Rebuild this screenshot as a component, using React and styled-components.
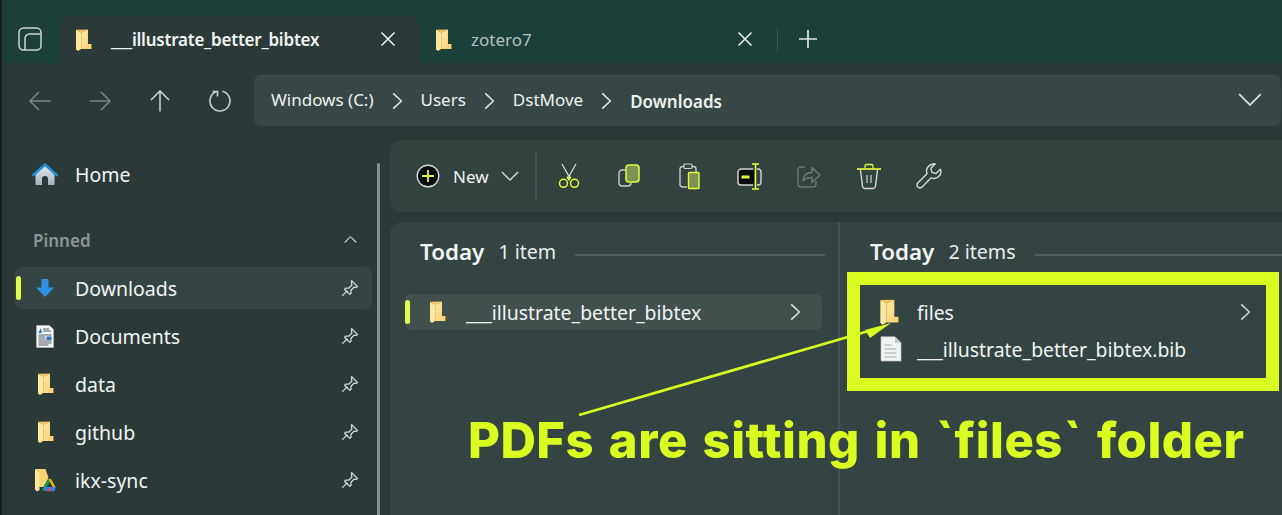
import React from "react";
import styled, { createGlobalStyle } from "styled-components";

const Global = createGlobalStyle`
  html, body { margin: 0; padding: 0; background: #2b3a38; }
  * { box-sizing: border-box; }
  #root { width: 1282px; height: 515px; overflow: hidden; }
`;

const Window = styled.div`
  position: relative;
  width: 1282px;
  height: 515px;
  overflow: hidden;
  display: flex;
  flex-direction: column;
  background: #2b3a38;
  border-left: 2px solid #171c1b;
  font-family: "Noto Sans", "Open Sans", sans-serif;
  color: #f2f4f3;
`;

const TitleBar = styled.div`
  height: 63px;
  flex: none;
  display: flex;
  align-items: flex-end;
  background: #1b3f39;
`;
const TabsButton = styled.div`
  width: 57px;
  height: 47px;
  flex: none;
  display: flex;
  align-items: center;
  justify-content: center;
  padding: 0 8px 0 6px;
  svg { margin-top: -1px; }
`;
const Tab = styled.div`
  height: 47px;
  display: flex;
  align-items: center;
  flex: none;
  width: ${(p) => p.$w}px;
  padding: 0 0 0 ${(p) => p.$pad}px;
  background: ${(p) => (p.$active ? "#2b3a38" : "transparent")};
  border-radius: 10px 10px 0 0;
  position: relative;
`;
const TabLabel = styled.span`
  flex: 1;
  margin-left: ${(p) => p.$gap}px;
  font-size: 17px;
  letter-spacing: ${(p) => (p.$active ? "-0.22px" : "0")};
  font-weight: ${(p) => (p.$active ? 600 : 400)};
  color: ${(p) => (p.$active ? "#f1f4f3" : "#b5c2bf")};
  white-space: nowrap;
  margin-top: 0;
`;
const CloseBox = styled.span`
  width: 18px;
  height: 18px;
  margin-right: ${(p) => p.$mr}px;
  margin-top: -2px;
  display: flex;
`;
const TabSep = styled.div`
  width: 1px;
  height: 24px;
  background: #395750;
  margin: 0 20px 0 0;
  align-self: center;
`;
const PlusBox = styled.div`
  width: 20px;
  height: 20px;
  margin-top: -2px;
  margin-right: 20px;
  align-self: center;
  display: flex;
`;

const NavBar = styled.div`
  height: 77px;
  flex: none;
  display: flex;
  align-items: flex-start;
  padding-top: 12px;
  border-bottom: 2px solid #293735;
`;
const NavButtons = styled.div`
  width: 252px;
  flex: none;
  height: 51px;
  display: flex;
  align-items: center;
  padding-left: 8px;
`;
const NavButton = styled.div`
  width: 60px;
  height: 100%;
  display: flex;
  align-items: center;
  justify-content: center;
  opacity: ${(p) => (p.$dim ? 0.42 : 0.85)};
`;
const Address = styled.div`
  flex: 1;
  height: 51px;
  margin-right: 1px;
  background: #364745;
  border-radius: 7px;
  border-top: 1px solid #3c4d4b;
  display: flex;
  align-items: center;
  padding-left: 17px;
`;
const Crumb = styled.span`
  font-size: 17px;
  font-weight: ${(p) => (p.$bold ? 600 : 400)};
  color: #eff2f1;
  white-space: nowrap;
  margin-top: ${(p) => (p.$bold ? 1 : -3)}px;
`;
const CrumbSep = styled.span`
  width: 47px;
  display: flex;
  justify-content: center;
`;
const AddressEnd = styled.span`
  margin-left: auto;
  margin-right: 19px;
  display: flex;
  margin-top: -2px;
`;

const Body = styled.div`
  flex: 1;
  display: flex;
  min-height: 0;
`;
const Sidebar = styled.aside`
  width: 388px;
  flex: none;
  position: relative;
  padding: 10px 0 0 13px;
`;
const ScrollThumb = styled.div`
  position: absolute;
  left: 375px;
  top: 23px;
  bottom: -10px;
  width: 3px;
  background: #84908e;
  border-radius: 2px;
`;
const HomeRow = styled.div`
  height: 50px;
  width: 357px;
  display: flex;
  align-items: center;
  padding-left: 17px;
`;
const Section = styled.div`
  height: 20px;
  margin: 30px 0 17px;
  width: 357px;
  padding: 0 15px 0 18px;
  display: flex;
  align-items: center;
  justify-content: space-between;
  font-size: 17px;
  font-weight: 600;
  color: #8b9694;
`;
const UpChevron = styled.span`
  display: flex;
  transform: rotate(180deg);
`;
const SideRow = styled.div`
  position: relative;
  height: 42px;
  width: 357px;
  margin-bottom: 6px;
  border-radius: 6px;
  background: ${(p) => (p.$active ? "#354543" : "transparent")};
  display: flex;
  align-items: center;
  padding-left: 17px;
  padding-right: 13px;
`;
const Indicator = styled.span`
  position: absolute;
  left: ${(p) => p.$left}px;
  top: ${(p) => p.$top}px;
  width: 5px;
  height: 24px;
  border-radius: 3px;
  background: #e1fb4e;
`;
const IconSlot = styled.span`
  width: 26px;
  height: 24px;
  flex: none;
  display: flex;
  align-items: center;
  justify-content: center;
`;
const SideLabel = styled.span`
  flex: 1;
  margin-left: 17px;
  font-size: 19.5px;
  color: #f1f4f3;
  white-space: nowrap;
  margin-top: 1px;
`;
const HomeLabel = styled(SideLabel)`
  margin-top: -1px;
`;

const Main = styled.main`
  flex: 1;
  min-width: 0;
  display: flex;
  flex-direction: column;
  gap: 10px;
`;
const Toolbar = styled.div`
  height: 72px;
  flex: none;
  background: #32423f;
  border-radius: 12px 0 0 12px;
  display: flex;
  align-items: center;
  padding-left: 26px;
`;
const NewButton = styled.div`
  display: flex;
  align-items: center;
  width: 119px;
  font-size: 17px;
  color: #f2f4f3;
`;
const NewLabel = styled.span`
  margin-left: 13px;
  margin-right: 12px;
`;
const ToolSep = styled.div`
  width: 2px;
  height: 48px;
  background: #445452;
  margin-right: 2px;
`;
const ToolButton = styled.div`
  width: 60px;
  display: flex;
  justify-content: center;
  align-items: center;
`;

const Content = styled.div`
  flex: 1;
  min-height: 0;
  background: #334442;
  border-radius: 12px 0 0 0;
  display: flex;
`;
const Column = styled.section`
  width: ${(p) => p.$w}px;
  flex: none;
  padding: ${(p) => p.$padTop}px 0 0;
  border-right: ${(p) => (p.$divider ? "2px solid #43534f" : "none")};
`;
const ColHead = styled.div`
  height: 30px;
  display: flex;
  align-items: center;
  padding-left: ${(p) => p.$pad}px;
  padding-right: ${(p) => p.$right}px;
`;
const HeadTitle = styled.span`
  font-size: 22.4px;
  font-weight: 600;
  color: #f2f4f3;
`;
const HeadCount = styled.span`
  font-size: 19.6px;
  color: #e9edec;
  margin-left: 14px;
`;
const HeadLine = styled.span`
  flex: 1;
  height: 2px;
  margin-left: ${(p) => p.$gap}px;
  margin-top: 7px;
  background: #4f5f5c;
`;
const FileRow = styled.div`
  position: relative;
  height: ${(p) => p.$h}px;
  margin: ${(p) => p.$m};
  display: flex;
  align-items: center;
  padding-left: ${(p) => p.$pad}px;
  padding-right: ${(p) => p.$right}px;
  border-radius: 6px;
  background: ${(p) => (p.$active ? "#414f4d" : "transparent")};
`;
const FileLabel = styled.span`
  flex: 1;
  margin-left: ${(p) => p.$gap}px;
  font-size: 19.4px;
  color: #f0f3f2;
  white-space: nowrap;
  margin-top: 1px;
`;

const Overlay = styled.svg`
  position: absolute;
  left: -2px;
  top: 0;
  width: 1282px;
  height: 515px;
  pointer-events: none;
`;
const HighlightBox = styled.div`
  position: absolute;
  left: 845px;
  top: 272px;
  width: 432px;
  height: 119px;
  border: 13.5px solid #dafc20;
  pointer-events: none;
`;
const Annotation = styled.div`
  position: absolute;
  left: 466px;
  top: 406px;
  font-family: Inter, "Liberation Sans", sans-serif;
  font-size: 49px;
  font-weight: 800;
  line-height: 70px;
  letter-spacing: 0.5px;
  word-spacing: 3.5px;
  color: #dafc20;
  white-space: nowrap;
`;

const Folder = ({ w = 18, h = 24 }) => (
  <svg width={w} height={h} viewBox="0 0 18 24">
    <defs>
      <linearGradient id="ff" x1="0" y1="0" x2="1" y2="1">
        <stop offset="0" stopColor="#ffe9a2" />
        <stop offset="1" stopColor="#f8cf6c" />
      </linearGradient>
    </defs>
    <path d="M2 1.8 7.2 4.4V21l-3.2 2L2 21.500z" fill="#ffe7a0" />
    <path d="M7.200 4.400 14 1.500V16h3.500v5H7.200z" fill="url(#ff)" />
    <path d="M2 1.800 14 1.500 7.200 4.400z" fill="#f6c95f" />
  </svg>
);

const Home = () => (
  <svg width="26" height="24" viewBox="0 0 26 24">
    <defs>
      <linearGradient id="hb" x1="0" y1="0" x2="0" y2="1">
        <stop offset="0" stopColor="#e4e8f0" />
        <stop offset="1" stopColor="#a6aebb" />
      </linearGradient>
    </defs>
    <path d="M3.500 10.500 13 3l9.500 7.500V22H16v-6a3 3 0 0 0-6 0v6H3.500z" fill="url(#hb)" />
    <path d="M1.500 12 13 1.500 24.500 12" fill="none" stroke="#1e8fdc" strokeWidth="2.600" strokeLinejoin="round" strokeLinecap="round" />
  </svg>
);
const DownArrow = () => (
  <svg width="20" height="20" viewBox="0 0 20 20">
    <path d="M6.500 1h7v8.500H19L10 19 1 9.500h5.500z" fill="#2f90e8" />
  </svg>
);
const Doc = () => (
  <svg width="18" height="23" viewBox="0 0 18 23">
    <path d="M.5.5h13l4 4v18H.5z" fill="#f3f5f6" stroke="#b9bfc2" strokeWidth=".6" />
    <path d="M2.500 8H6l-1.200-5z" fill="#2673c8" />
    <path d="M7 4h6M7 6h8M2.500 10h13M2.500 12h7M2.500 14h7M2.500 16h13M2.500 18h13M2.500 20h10" stroke="#555f66" strokeWidth="1" />
    <rect x="10.500" y="11.500" width="5" height="3.500" fill="#2f79c4" />
  </svg>
);
const DriveFolder = () => (
  <svg width="22" height="24" viewBox="0 0 22 24">
    <path d="M1 1h10.500l3 9-5 9H5V4z" fill="#f8d36f" />
    <path d="M1 1 5.500 4v18L3 23.500l-2-2z" fill="#ffe7a0" />
    <path d="M14.500 11 8 21.500l2 1.500 7-11z" fill="#0f9d58" />
    <path d="M14.500 11h2.500l5 9h-3z" fill="#f5b400" />
    <path d="M11 23l-1.500-2.500L11.500 19H22l-1.500 4z" fill="#3d7de8" />
    <path d="M12 23.200l3-3.700 2.500 3.700z" fill="#e6483d" opacity=".9" />
  </svg>
);
const Pin = () => (
  <svg width="18" height="18" viewBox="0 0 18 18" fill="none" stroke="#d6dbda" strokeWidth="1.300" strokeLinejoin="round" strokeLinecap="round">
    <path d="M10.600 1.600 16.400 7.400l-1.200 1-2.100-.3-3.200 3.200.1 3-1.100 1.100L3.600 10.200l1.100-1.100 3 .1 3.200-3.200-.4-2.100z" />
    <path d="M6 12 1.600 16.400" />
  </svg>
);
const Chevron = ({ size = 18, color = "#e6eae9" }) => (
  <svg width={size * 0.7} height={size} viewBox="0 0 14 20" fill="none" stroke={color} strokeWidth="1.600">
    <path d="M2.500 1.500 11.500 10 2.500 18.500" />
  </svg>
);
const ChevronDown = ({ w = 18, color = "#d8dddc", sw = 1.500 }) => (
  <svg width={w} height={w * 0.55} viewBox="0 0 20 11" fill="none" stroke={color} strokeWidth={sw}>
    <path d="M1 1 10 10 19 1" />
  </svg>
);
const Close = ({ color = "#f0f3f2" }) => (
  <svg width="18" height="18" viewBox="0 0 18 18" stroke={color} strokeWidth="1.500" fill="none">
    <path d="M2.500 2.500 15.500 15.500M15.500 2.500 2.500 15.500" />
  </svg>
);
const Tabs = () => (
  <svg width="24" height="24" viewBox="0 0 24 24" fill="none" stroke="#cdd4d2" strokeWidth="1.500">
    <rect x="1" y="1" width="22" height="22" rx="4.500" />
    <path d="M7 23V11.500A4.500 4.500 0 0 1 11.500 7H23" />
  </svg>
);
const NavArrow = ({ rot }) => (
  <svg width="24" height="24" viewBox="0 0 24 24" fill="none" stroke="#e6eae9" strokeWidth="1.600" style={{ transform: `rotate(${rot}deg)` }}>
    <path d="M22.500 12H2M11 3 2 12l9 9" />
  </svg>
);
const Refresh = () => (
  <svg width="24" height="24" viewBox="0 0 24 24" fill="none" stroke="#e6eae9" strokeWidth="1.600">
    <path d="M14.500 2.300A10 10 0 1 1 8.500 2.600" />
    <path d="M4.500 2.500H9.500V7.500" />
  </svg>
);
const Plus = () => (
  <svg width="20" height="20" viewBox="0 0 20 20" stroke="#dfe4e3" strokeWidth="1.700">
    <path d="M10 1v18M1 10h18" />
  </svg>
);
const NewIcon = () => (
  <svg width="24" height="24" viewBox="0 0 24 24">
    <circle cx="12" cy="12" r="10.800" fill="#0a0d0c" stroke="#d3d8d7" strokeWidth="1.400" />
    <path d="M12 6v12M6 12h12" stroke="#d8f23c" strokeWidth="1.900" />
  </svg>
);
const Scissors = () => (
  <svg width="22" height="26" viewBox="0 0 22 26" fill="none">
    <path d="M4 1 12.500 16M18 1 9.500 16" stroke="#d7dcdb" strokeWidth="1.300" />
    <path d="M9 13.500 11 17 13 13.500" stroke="#e4fa3a" strokeWidth="1.300" />
    <circle cx="5.500" cy="20.300" r="4" stroke="#e4fa3a" strokeWidth="1.500" />
    <circle cx="16.500" cy="20.300" r="4" stroke="#e4fa3a" strokeWidth="1.500" />
  </svg>
);
const Copy = () => (
  <svg width="22" height="24" viewBox="0 0 22 24" fill="none">
    <path d="M7 6H4a3 3 0 0 0-3 3v10a3 3 0 0 0 3 3h6a3 3 0 0 0 3-3" stroke="#c9cfcd" strokeWidth="1.400" />
    <rect x="8" y="1" width="13" height="17" rx="3" fill="#7e9157" stroke="#e4fa3a" strokeWidth="1.500" />
  </svg>
);
const Paste = () => (
  <svg width="21" height="27" viewBox="0 0 21 27" fill="none">
    <path d="M8 24H3.500A2.500 2.500 0 0 1 1 21.500V6A2.500 2.500 0 0 1 3.500 3.500h11A2.500 2.500 0 0 1 17 6v3" stroke="#c9cfcd" strokeWidth="1.400" />
    <rect x="5" y="1" width="8" height="4.500" rx="1" fill="#32423f" stroke="#c9cfcd" strokeWidth="1.200" />
    <rect x="9.500" y="9.500" width="10.500" height="16" rx=".8" fill="#7e9157" stroke="#e4fa3a" strokeWidth="1.400" />
  </svg>
);
const Rename = () => (
  <svg width="25" height="27" viewBox="0 0 25 27" fill="none">
    <rect x="1" y="6" width="16" height="16" rx="3" fill="#0a0d0c" />
    <path d="M16 6H4a3 3 0 0 0-3 3v10a3 3 0 0 0 3 3h12M20 6h1a3 3 0 0 1 3 3v10a3 3 0 0 1-3 3h-1" stroke="#d3d8d7" strokeWidth="1.400" />
    <path d="M4.500 14h8" stroke="#e4fa3a" strokeWidth="3" />
    <path d="M15 1h7M15 26h7M18.500 1v25" stroke="#e4fa3a" strokeWidth="1.500" />
  </svg>
);
const Share = () => (
  <svg width="24" height="24" viewBox="0 0 24 24" fill="none" stroke="#6c7977" strokeWidth="1.400">
    <path d="M8 3H4a3 3 0 0 0-3 3v14a3 3 0 0 0 3 3h12a3 3 0 0 0 3-3v-3" />
    <path d="M6 17c.5-6 4.500-8.500 9-8.500V3.500l8 7.500-8 7.500v-5c-3.500 0-6.500.5-9 3.500z" strokeLinejoin="round" />
  </svg>
);
const Trash = () => (
  <svg width="24" height="27" viewBox="0 0 24 27" fill="none">
    <path d="M3.500 7 5.500 23a2.800 2.800 0 0 0 2.800 2.500h7.400a2.800 2.800 0 0 0 2.800-2.500L20.500 7" stroke="#d3d8d7" strokeWidth="1.400" />
    <path d="M10 12v8M14 12v8" stroke="#c2c8c6" strokeWidth="1.300" />
    <path d="M8 5.500V3A1.500 1.500 0 0 1 9.500 1.500h5A1.500 1.500 0 0 1 16 3v2.500" stroke="#e4fa3a" strokeWidth="1.300" />
    <path d="M0 6h24" stroke="#e4fa3a" strokeWidth="1.700" />
  </svg>
);
const Wrench = () => (
  <svg width="26" height="26" viewBox="0 0 24 24" fill="none" stroke="#d3d8d7" strokeWidth="1.300" strokeLinejoin="round">
    <path d="M16 1.200a6.300 6.300 0 0 0-5.800 8.700L1.600 18.500a2.700 2.700 0 0 0 3.800 3.800l8.600-8.600a6.300 6.300 0 0 0 8.500-8l-4 4-3.800-1-1-3.800 4-4a6 6 0 0 0-1.700-.7z" />
  </svg>
);
const FileIcon = () => (
  <svg width="22" height="26" viewBox="0 0 22 26">
    <path d="M1 .8h14l6 6V25H1z" fill="#f2f3f3" stroke="#bdc2c2" strokeWidth=".7" />
    <path d="M15 .8v6h6z" fill="#c5c9c9" />
    <path d="M4.500 9h7M4.500 13h12M4.500 17h12M4.500 21h12" stroke="#bcc2c2" strokeWidth="1.600" />
  </svg>
);

const pinned = [
  { name: "Downloads", icon: <DownArrow />, active: true },
  { name: "Documents", icon: <Doc /> },
  { name: "data", icon: <Folder /> },
  { name: "github", icon: <Folder /> },
  { name: "ikx-sync", icon: <DriveFolder /> },
];

const tools = [<Scissors />, <Copy />, <Paste />, <Rename />, <Share />, <Trash />, <Wrench />];

export default function App() {
  return (
    <>
      <Global />
      <Window>
        <TitleBar>
          <TabsButton><Tabs /></TabsButton>
          <Tab $active $w={360} $pad={15}>
            <Folder />
            <TabLabel $active $gap={19}>___illustrate_better_bibtex</TabLabel>
            <CloseBox $mr={22}><Close /></CloseBox>
          </Tab>
          <Tab $w={419} $pad={15}>
            <Folder />
            <TabLabel $gap={19}>zotero7</TabLabel>
            <CloseBox $mr={23}><Close /></CloseBox>
            <TabSep />
            <PlusBox><Plus /></PlusBox>
          </Tab>
        </TitleBar>
        <NavBar>
          <NavButtons>
            <NavButton $dim><NavArrow rot={0} /></NavButton>
            <NavButton $dim><NavArrow rot={180} /></NavButton>
            <NavButton><NavArrow rot={90} /></NavButton>
            <NavButton><Refresh /></NavButton>
          </NavButtons>
          <Address>
            <Crumb>Windows (C:)</Crumb>
            <CrumbSep><Chevron /></CrumbSep>
            <Crumb>Users</Crumb>
            <CrumbSep><Chevron /></CrumbSep>
            <Crumb>DstMove</Crumb>
            <CrumbSep><Chevron /></CrumbSep>
            <Crumb $bold>Downloads</Crumb>
            <AddressEnd><ChevronDown w={24} /></AddressEnd>
          </Address>
        </NavBar>
        <Body>
          <Sidebar>
            <ScrollThumb />
            <HomeRow>
              <IconSlot><Home /></IconSlot>
              <HomeLabel>Home</HomeLabel>
            </HomeRow>
            <Section>
              Pinned
              <UpChevron><ChevronDown w={13} color="#c7cdcc" sw={1.800} /></UpChevron>
            </Section>
            {pinned.map((p) => (
              <SideRow key={p.name} $active={p.active}>
                {p.active && <Indicator $left={1} $top={9} />}
                <IconSlot>{p.icon}</IconSlot>
                <SideLabel>{p.name}</SideLabel>
                <Pin />
              </SideRow>
            ))}
          </Sidebar>
          <Main>
            <Toolbar>
              <NewButton>
                <NewIcon />
                <NewLabel>New</NewLabel>
                <ChevronDown w={18} />
              </NewButton>
              <ToolSep />
              {tools.map((t, i) => (
                <ToolButton key={i}>{t}</ToolButton>
              ))}
            </Toolbar>
            <Content>
              <Column $w={450} $divider $padTop={14}>
                <ColHead $pad={30} $right={13}>
                  <HeadTitle>Today</HeadTitle>
                  <HeadCount>1 item</HeadCount>
                  <HeadLine $gap={19} />
                </ColHead>
                <FileRow $active $h={36} $m="28px 16px 0 15px" $pad={23} $right={20}>
                  <Indicator $left={0} $top={6} />
                  <Folder />
                  <FileLabel $gap={20}>___illustrate_better_bibtex</FileLabel>
                  <Chevron color="#dfe4e3" />
                </FileRow>
              </Column>
              <Column $w={442} $padTop={14}>
                <ColHead $pad={30} $right={0}>
                  <HeadTitle>Today</HeadTitle>
                  <HeadCount>2 items</HeadCount>
                  <HeadLine $gap={19} />
                </ColHead>
                <FileRow $h={36} $m="28px 0 0 0" $pad={38} $right={30}>
                  <Folder w={21} h={28} />
                  <FileLabel $gap={18}>files</FileLabel>
                  <Chevron color="#cfd5d4" />
                </FileRow>
                <FileRow $h={36} $m="1px 0 0 0" $pad={40} $right={30}>
                  <FileIcon />
                  <FileLabel $gap={15}>___illustrate_better_bibtex.bib</FileLabel>
                </FileRow>
              </Column>
            </Content>
          </Main>
        </Body>
        <HighlightBox />
        <Overlay viewBox="0 0 1282 515">
          <path d="M579 415 872 330" stroke="#dafc20" strokeWidth="2.800" />
          <path d="M891 323 865 330 870 338z" fill="#dafc20" />
        </Overlay>
        <Annotation>PDFs are sitting in `files` folder</Annotation>
      </Window>
    </>
  );
}
